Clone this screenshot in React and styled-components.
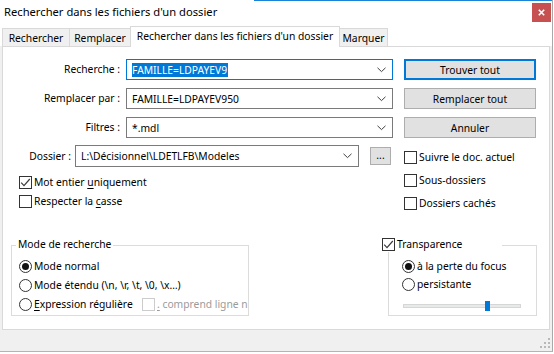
import React from 'react';
import styled, { createGlobalStyle } from 'styled-components';

const FONT = `"Noto Sans", "Open Sans", "DejaVu Sans", sans-serif`;

const Global = createGlobalStyle`
  html, body { margin: 0; padding: 0; background: #ffffff; }
  body { font-family: ${FONT}; color: #000; }
  * { box-sizing: border-box; }
`;

const Window = styled.div`
  width: 553px;
  height: 352px;
  display: flex;
  flex-direction: column;
  background: #f0f0f0;
  border-right: 1px solid #a9a9a9;
  border-bottom: 1px solid #b4b4b4;
  font-family: ${FONT};
  font-size: 10.3px;
  overflow: hidden;
`;

const TitleBar = styled.div`
  height: 23px;
  flex: none;
  display: flex;
  align-items: flex-start;
  justify-content: space-between;
  background: #ffffff;
  border-top: 1px solid;
  border-image: linear-gradient(to right, #ffffff 0 46%, #1883d7 46%) 1;
`;

const Title = styled.div`
  padding: 3px 0 0 4px;
  font-size: 11.2px;
  line-height: 16px;
  color: #000;
`;

const CloseBox = styled.div`
  width: 19px;
  height: 19px;
  margin: 2px 1px 0 0;
  background: #c75050;
  display: flex;
  align-items: center;
  justify-content: center;
`;

const TabStrip = styled.div`
  height: 23px;
  flex: none;
  display: flex;
  align-items: flex-end;
  padding-left: 2px;
  background: #ffffff;
`;

const Tab = styled.div`
  width: ${(p) => p.$w}px;
  height: ${(p) => (p.$active ? 21 : 18)}px;
  margin-left: ${(p) => (p.$first ? 0 : -1)}px;
  margin-bottom: ${(p) => (p.$active ? -1 : 0)}px;
  position: ${(p) => (p.$active ? 'relative' : 'static')};
  z-index: ${(p) => (p.$active ? 1 : 'auto')};
  background: ${(p) => (p.$active ? '#ffffff' : '#f0f0f0')};
  border: 1px solid #d9d9d9;
  border-bottom: none;
  display: flex;
  align-items: center;
  justify-content: center;
  padding-bottom: ${(p) => (p.$active ? 3 : 0)}px;
  white-space: nowrap;
  line-height: 14px;
`;

const Panel = styled.div`
  flex: 1;
  margin: 0 2px;
  background: #ffffff;
  border: 1px solid #d9d9d9;
  display: flex;
  flex-direction: column;
  padding: 12px 0 13px 0;
  min-height: 0;
`;

const FieldsGrid = styled.div`
  display: grid;
  grid-template-columns: 123px 278px 132px;
  grid-auto-rows: 21px;
  row-gap: 8px;
  align-items: center;
`;

const Label = styled.div`
  text-align: right;
  padding-right: ${(p) => p.$pr || 6}px;
  width: ${(p) => (p.$w ? `${p.$w}px` : 'auto')};
  flex: none;
  white-space: nowrap;
  line-height: 15px;
`;

const Combo = styled.div`
  width: ${(p) => p.$w}px;
  height: ${(p) => p.$h || 21}px;
  flex: none;
  border: 1px solid ${(p) => (p.$focus ? '#0078d7' : '#7a7a7a')};
  background: #ffffff;
  display: flex;
  align-items: center;
  padding: 0 6px 0 4px;
  white-space: nowrap;
`;

const ComboText = styled.span`
  flex: 1;
  overflow: hidden;
  line-height: 14px;
  padding-left: 1px;
`;

const Selected = styled.span`
  background: #0078d7;
  color: #ffffff;
  display: inline-block;
  line-height: 14px;
  padding: 0 1px 0 0;
`;

const Button = styled.div`
  width: ${(p) => p.$w || 132}px;
  height: ${(p) => p.$h || 21}px;
  flex: none;
  background: #e1e1e1;
  border: ${(p) => (p.$default ? '2px solid #0078d7' : '1px solid #adadad')};
  display: flex;
  align-items: center;
  justify-content: center;
  line-height: 14px;
  white-space: nowrap;
`;

const Middle = styled.div`
  display: flex;
  margin-top: 7px;
`;

const MidLeft = styled.div`
  width: 401px;
  display: flex;
  flex-direction: column;
`;

const DossierRow = styled.div`
  display: flex;
  align-items: center;
  height: 22px;
`;

const BrowseButton = styled(Button)`
  margin-left: 11px;
  padding-bottom: 3px;
`;

const CheckList = styled.div`
  display: flex;
  flex-direction: column;
  gap: ${(p) => p.$gap}px;
  padding-left: ${(p) => p.$pl || 0}px;
  padding-top: ${(p) => p.$pt || 0}px;
  margin-top: ${(p) => p.$mt || 0}px;
`;

const Row = styled.div`
  display: flex;
  align-items: center;
  height: 13px;
  white-space: nowrap;
  line-height: 15px;
`;

const Text = styled.span`
  white-space: pre;
  line-height: 15px;
  color: ${(p) => (p.$disabled ? '#9b9b9b' : '#000')};
`;

const Box = styled.div`
  width: 13px;
  height: 13px;
  flex: none;
  border: 1px solid ${(p) => (p.$disabled ? '#cccccc' : '#333333')};
  background: #ffffff;
  margin-right: ${(p) => p.$mr ?? 2}px;
  display: flex;
  align-items: center;
  justify-content: center;
`;

const Circle = styled.div`
  width: 13px;
  height: 13px;
  flex: none;
  border: 1px solid #333333;
  border-radius: 50%;
  background: #ffffff;
  margin-right: 2px;
  display: flex;
  align-items: center;
  justify-content: center;
`;

const Dot = styled.div`
  width: 7px;
  height: 7px;
  border-radius: 50%;
  background: #111111;
`;

const U = styled.span`
  text-decoration: underline;
  text-underline-offset: 2px;
`;

const BottomRow = styled.div`
  margin-top: auto;
  display: flex;
  padding-left: 8px;
`;

const Group = styled.div`
  position: relative;
  width: ${(p) => p.$w}px;
  height: 71px;
  margin-left: ${(p) => p.$ml || 0}px;
  border: 1px solid #dcdcdc;
  padding: 14px 0 0 ${(p) => p.$pl}px;
  display: flex;
  flex-direction: column;
  gap: ${(p) => p.$gap}px;
`;

const Legend = styled.div`
  position: absolute;
  top: -9px;
  left: ${(p) => p.$left}px;
  width: ${(p) => (p.$w ? `${p.$w}px` : 'auto')};
  height: 15px;
  background: #ffffff;
  padding: 0 ${(p) => p.$pad ?? 2}px;
  display: flex;
  align-items: center;
  white-space: nowrap;
  line-height: 15px;
`;

const ExprSpacer = styled.span`
  width: 123px;
  flex: none;
  display: flex;
  align-items: center;
`;

const Slider = styled.div`
  position: relative;
  width: 118px;
  height: 10px;
  margin: 5px 0 0 1px;
`;

const Track = styled.div`
  margin-top: 3px;
  height: 4px;
  background: #e7eaea;
  border: 1px solid #d6d6d6;
`;

const Thumb = styled.div`
  position: absolute;
  top: 0;
  left: 82px;
  width: 5px;
  height: 10px;
  background: #0078d7;
`;

const BottomBar = styled.div`
  height: 21px;
  flex: none;
  display: flex;
  justify-content: flex-end;
  align-items: flex-end;
  padding: 0 1px 2px 0;
`;

const Chevron = () => (
  <svg width="9" height="6" viewBox="0 0 9 6">
    <polyline points="0.5,0.8 4.5,4.6 8.5,0.8" fill="none" stroke="#404040" strokeWidth="1" />
  </svg>
);

const Check = () => (
  <svg width="11" height="11" viewBox="0 0 11 11">
    <polyline points="1.2,5.6 4,8.6 9.8,2" fill="none" stroke="#3c3c3c" strokeWidth="1.2" />
  </svg>
);

const CheckBox = ({ checked, disabled, mr }) => (
  <Box $disabled={disabled} $mr={mr}>{checked && <Check />}</Box>
);

const Radio = ({ checked }) => <Circle>{checked && <Dot />}</Circle>;

const Grip = () => (
  <svg width="11" height="11" viewBox="0 0 11 11">
    {[[8, 0], [4, 4], [8, 4], [0, 8], [4, 8], [8, 8]].map(([x, y]) => (
      <rect key={`${x}-${y}`} x={x} y={y} width="2" height="2" fill="#b9b9b9" />
    ))}
  </svg>
);

export default function App() {
  return (
    <>
      <Global />
      <Window>
        <TitleBar>
          <Title>Rechercher dans les fichiers d'un dossier</Title>
          <CloseBox>
            <svg width="7" height="7" viewBox="0 0 7 7">
              <path d="M0.8 0.8 L6.2 6.2 M6.2 0.8 L0.8 6.2" stroke="#ffffff" strokeWidth="1.6" />
            </svg>
          </CloseBox>
        </TitleBar>
        <TabStrip>
          <Tab $w={68} $first>Rechercher</Tab>
          <Tab $w={62}>Remplacer</Tab>
          <Tab $w={210} $active>Rechercher dans les fichiers d'un dossier</Tab>
          <Tab $w={49}>Marquer</Tab>
        </TabStrip>
        <Panel>
          <FieldsGrid>
            <Label>Recherche :</Label>
            <Combo $w={267} $focus>
              <ComboText><Selected>FAMILLE=LDPAYEV9</Selected></ComboText>
              <Chevron />
            </Combo>
            <Button $default>Trouver tout</Button>

            <Label>Remplacer par :</Label>
            <Combo $w={267}>
              <ComboText>FAMILLE=LDPAYEV950</ComboText>
              <Chevron />
            </Combo>
            <Button>Remplacer tout</Button>

            <Label>Filtres :</Label>
            <Combo $w={267}>
              <ComboText>*.mdl</ComboText>
              <Chevron />
            </Combo>
            <Button>Annuler</Button>
          </FieldsGrid>

          <Middle>
            <MidLeft>
              <DossierRow>
                <Label $w={72} $pr={4}>Dossier :</Label>
                <Combo $w={284} $h={22}>
                  <ComboText>L:\Décisionnel\LDETLFB\Modeles</ComboText>
                  <Chevron />
                </Combo>
                <BrowseButton $w={21} $h={18}>...</BrowseButton>
              </DossierRow>
              <CheckList $gap={6} $pl={16} $mt={9}>
                <Row><CheckBox checked /><Text>Mot entier <U>u</U>niquement</Text></Row>
                <Row><CheckBox /><Text>Respecter la <U>c</U>asse</Text></Row>
              </CheckList>
            </MidLeft>
            <CheckList $gap={10} $pt={6}>
              <Row><CheckBox /><Text>Suivre le doc. actuel</Text></Row>
              <Row><CheckBox /><Text>Sous-dossiers</Text></Row>
              <Row><CheckBox /><Text>Dossiers cachés</Text></Row>
            </CheckList>
          </Middle>

          <BottomRow>
            <Group $w={238} $pl={7} $gap={6}>
              <Legend $left={4}>Mode de recherche</Legend>
              <Row><Radio checked /><Text>Mode normal</Text></Row>
              <Row><Radio /><Text>Mode étendu (\n, \r, \t, \0, \x…)</Text></Row>
              <Row>
                <ExprSpacer><Radio /><Text><U>E</U>xpression régulière</Text></ExprSpacer>
                <CheckBox disabled mr={2} />
                <Text $disabled><U>.</U> comprend ligne n</Text>
              </Row>
            </Group>
            <Group $w={149} $ml={139} $pl={13} $gap={5}>
              <Legend $left={-7} $w={120} $pad={0}>
                <CheckBox checked /><Text>Transparence</Text>
              </Legend>
              <Row><Radio checked /><Text>à la perte du focus</Text></Row>
              <Row><Radio /><Text>persistante</Text></Row>
              <Slider>
                <Track />
                <Thumb />
              </Slider>
            </Group>
          </BottomRow>
        </Panel>
        <BottomBar>
          <Grip />
        </BottomBar>
      </Window>
    </>
  );
}
